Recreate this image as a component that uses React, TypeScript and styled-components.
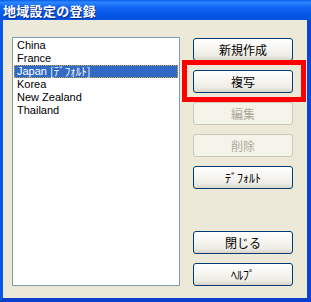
import styled, { createGlobalStyle } from "styled-components";

const GlobalStyle = createGlobalStyle`
  html, body {
    margin: 0;
    padding: 0;
    width: 311px;
    height: 302px;
    overflow: hidden;
  }
  #root {
    width: 311px;
    height: 302px;
  }
`;

const Window = styled.div`
  width: 311px;
  height: 302px;
  display: flex;
  flex-direction: column;
  box-sizing: border-box;
  font-family: "Liberation Sans", "Noto Sans CJK JP", sans-serif;
`;

const TitleBar = styled.div`
  height: 20px;
  flex-shrink: 0;
  display: flex;
  align-items: center;
  padding-left: 3px;
  background: linear-gradient(
    180deg,
    #0a5fe6 0%,
    #2b86ff 12%,
    #1166f2 35%,
    #0558e6 70%,
    #0550df 100%
  );
  color: #fff;
  font-family: "Noto Sans CJK JP", sans-serif;
  font-weight: 700;
  font-size: 13px;
  letter-spacing: 0.3px;
  text-shadow: 1px 1px 0 #0a2a8a;
`;

const Body = styled.div`
  flex: 1;
  display: flex;
  gap: 13px;
  background: #ece9d8;
  border-left: 3px solid #0757e8;
  border-right: 4px solid #0a45d4;
  border-bottom: 4px solid #0a3ecb;
  padding: 17px 14px 12px 9px;
  box-sizing: border-box;
  min-height: 0;
`;

const ListBox = styled.div`
  width: 168px;
  height: 249px;
  box-sizing: border-box;
  border: 1px solid #7f9db9;
  background: #fff;
  padding: 1px;
  display: flex;
  flex-direction: column;
`;

const ListItem = styled.div<{ $selected?: boolean }>`
  height: 13px;
  line-height: 13px;
  font-size: 11px;
  padding-left: 2px;
  white-space: nowrap;
  box-sizing: border-box;
  color: ${(p) => (p.$selected ? "#fff" : "#000")};
  background: ${(p) => (p.$selected ? "#316ac5" : "transparent")};
  border: 1px dotted ${(p) => (p.$selected ? "#c8a64a" : "transparent")};
  display: flex;
  align-items: center;
`;

const Kana = styled.span`
  font-family: "Noto Sans CJK JP", sans-serif;
  font-size: 11px;
`;

const ButtonColumn = styled.div`
  width: 100px;
  display: flex;
  flex-direction: column;
  gap: 9px;
  padding-top: 1px;
`;

const Spacer = styled.div`
  flex: 1;
`;

const Button = styled.div<{ $disabled?: boolean }>`
  position: relative;
  height: 23px;
  box-sizing: border-box;
  border-radius: 3px;
  border: 1px solid ${(p) => (p.$disabled ? "#cac8bb" : "#003c74")};
  background: ${(p) =>
    p.$disabled
      ? "#f5f4ea"
      : "linear-gradient(180deg, #ffffff 0%, #f7f6f2 40%, #ecebe4 80%, #d8d4c8 100%)"};
  color: ${(p) => (p.$disabled ? "#aca899" : "#000")};
  font-family: "Noto Sans CJK JP", sans-serif;
  font-size: 12px;
  display: flex;
  align-items: center;
  justify-content: center;
  flex-shrink: 0;
`;

const Highlight = styled.div`
  position: absolute;
  left: -12px;
  right: -14px;
  top: -11px;
  bottom: -10px;
  border: 5px solid #ff0000;
  pointer-events: none;
`;

const countries = ["China", "France", "Japan", "Korea", "New Zealand", "Thailand"];

export default function App() {
  return (
    <>
      <GlobalStyle />
      <Window>
        <TitleBar>地域設定の登録</TitleBar>
        <Body>
          <ListBox>
            {countries.map((c) => (
              <ListItem key={c} $selected={c === "Japan"}>
                {c === "Japan" ? (
                  <>
                    Japan&nbsp;<Kana>[ﾃﾞﾌｫﾙﾄ]</Kana>
                  </>
                ) : (
                  c
                )}
              </ListItem>
            ))}
          </ListBox>
          <ButtonColumn>
            <Button>新規作成</Button>
            <Button>
              複写
              <Highlight />
            </Button>
            <Button $disabled>編集</Button>
            <Button $disabled>削除</Button>
            <Button>ﾃﾞﾌｫﾙﾄ</Button>
            <Spacer />
            <Button>閉じる</Button>
            <Button>ﾍﾙﾌﾟ</Button>
          </ButtonColumn>
        </Body>
      </Window>
    </>
  );
}
